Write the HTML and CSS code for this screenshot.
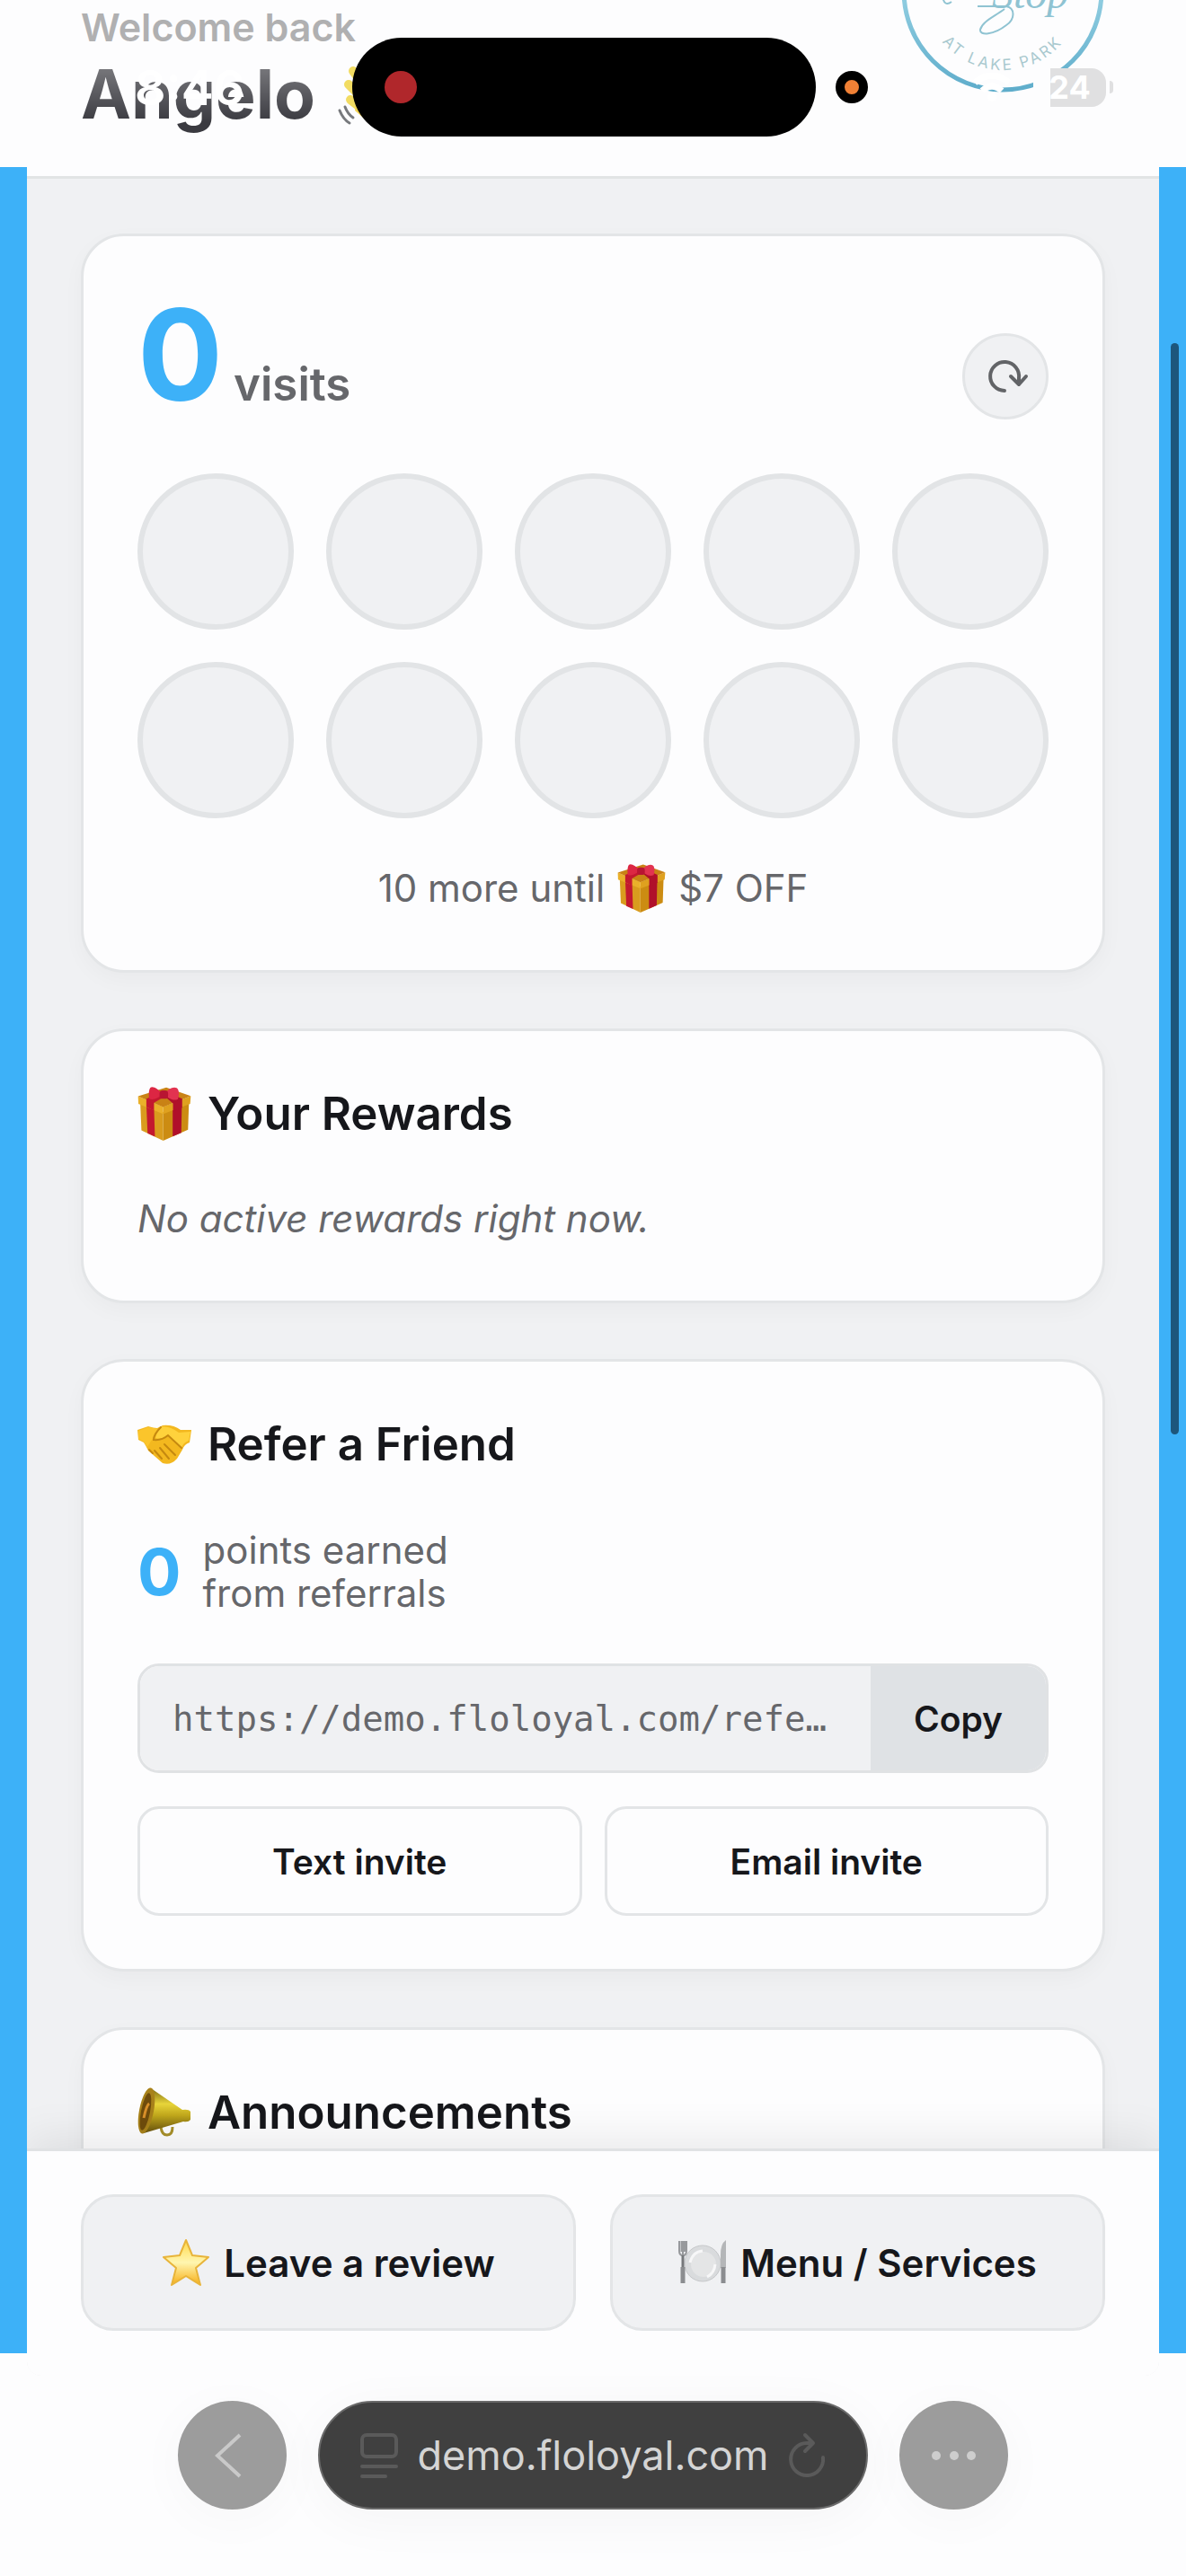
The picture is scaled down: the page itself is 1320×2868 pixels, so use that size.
FILE: index.html
```html
<!DOCTYPE html>
<html lang="en">
<head>
<meta charset="utf-8">
<meta name="viewport" content="width=device-width, initial-scale=1">
<title>Flo Loyal</title>
<link rel="stylesheet" href="styles.css">
</head>
<body>
<svg class="defs" aria-hidden="true">
  <symbol id="gift" viewBox="0 0 172 176">
    <path fill="#d99c1e" d="M7 50 82 82v94L11 142z"/>
    <path fill="#cc8c12" d="M82 82l84-30-3 88-81 36z"/>
    <path fill="#c3182f" d="M27 56l25 12 3 95-24-11z"/>
    <path fill="#b0102a" d="M113 66l30-12-2 96-28 12z"/>
    <path fill="#eab02a" d="M0 31l82 34v24L1 56z"/>
    <path fill="#dfa11f" d="M82 65l90-35-2 26-88 33z"/>
    <path fill="#c98215" d="M0 31 92 2l80 28-90 36z"/>
    <path fill="#c3182f" d="M27 39l60-24 18 6-53 31v26l-25-12z"/>
    <path fill="#b0102a" d="M144 39 92 16l-16 6 38 32v26l30-12z"/>
    <path fill="#dc2643" d="M81 24C66 8 48-4 40 3c-6 8-5 25-4 36 16 6 30-4 45-15z"/>
    <path fill="#e23350" d="M84 24c14-16 30-26 42-20 9 6 8 24 4 36-16 8-34-5-46-16z"/>
    <rect fill="#b81532" x="70" y="12" width="28" height="27" rx="10"/>
  </symbol>
</svg>

<div class="page">
  <div class="shell">
    <header class="header">
      <div class="greeting">
        <p class="eyebrow">Welcome back</p>
        <h1 class="name"><span class="name-text">Angelo</span>
          <svg class="wave" viewBox="0 0 60 76" aria-hidden="true">
            <g fill="none" stroke="#f2dc62" stroke-width="10" stroke-linecap="round"><path d="M18 12l16 22M13 27l18 18M15 44l18 14"/></g>
            <path fill="#efd04f" d="M26 30h30v40H36L20 56z"/>
            <g fill="none" stroke="#77797d" stroke-width="3" stroke-linecap="round"><path d="M3 56q4 10 11 14M9 52q3 8 9 12"/></g>
          </svg>
        </h1>
      </div>
      <svg class="logo" viewBox="0 0 228 104" role="img" aria-label="Stop at Lake Park">
        <defs>
          <linearGradient id="ring" x1="0" y1="0" x2="0" y2="1"><stop offset=".5" stop-color="#93cfe2"/><stop offset="1" stop-color="#5fadcb"/></linearGradient>
          <path id="arc" d="M26-10a88 88 0 0 0 176 0"/>
        </defs>
        <circle cx="114" cy="-10" r="110" fill="none" stroke="url(#ring)" stroke-width="5"/>
        <text class="logo-script" x="102" y="9">Stop</text>
        <path d="M86 7h32c10 2 10 14 0 21-14 11-30 12-29 5 2-9 15-14 27-23M47-4q2 12 10 6" fill="none" stroke="#8fc3d2" stroke-width="2"/>
        <text class="logo-arc"><textPath href="#arc" startOffset="50%" text-anchor="middle">AT LAKE PARK</textPath></text>
      </svg>
    </header>

    <main class="content">
      <section class="card">
        <div class="visits-row">
          <p class="visits"><span class="visits-count">0</span> <span class="visits-label">visits</span></p>
          <button class="refresh" type="button" aria-label="Refresh">
            <svg viewBox="0 0 44 44" aria-hidden="true"><path d="M21 38A16 16 0 1 1 37 24v5M28 22l9 9 8-9" fill="none" stroke="#626467" stroke-width="4" stroke-linecap="round" stroke-linejoin="round"/></svg>
          </button>
        </div>
        <div class="stamps">
          <span class="stamp"></span><span class="stamp"></span><span class="stamp"></span><span class="stamp"></span><span class="stamp"></span>
          <span class="stamp"></span><span class="stamp"></span><span class="stamp"></span><span class="stamp"></span><span class="stamp"></span>
        </div>
        <p class="progress">10 more until <svg class="progress-icon" aria-hidden="true"><use href="#gift"/></svg> $7 OFF</p>
      </section>

      <section class="card">
        <h2 class="card-title"><svg class="title-icon" aria-hidden="true"><use href="#gift"/></svg>Your Rewards</h2>
        <p class="empty">No active rewards right now.</p>
      </section>

      <section class="card">
        <h2 class="card-title">
          <svg class="title-icon" viewBox="0 0 60 60" aria-hidden="true">
            <path fill="#f3b81f" d="M0 14 12 10q6 2 10 2l6-3q12-1 20 5l12 0-2 14q-6 2-8 8l-6 10q-7 8-16 5L12 37q-3-6-5-9L1 25z"/>
            <path fill="#ffd23c" d="M24 11q10-3 22 6l13-1-2 10q-6 2-8 8l-15-13q-8 4-14 2z"/>
            <path fill="#fbc52b" d="M1 15l11-4 12 2-8 12-5 8-4-6-6-3z"/>
            <g fill="none" stroke="#c58910" stroke-width="2" stroke-linecap="round"><path d="M26 11q-8 8-8 14 9 1 16-5l15 14M30 30l12 12M25 34l10 12M19 37l8 9M13 36l4 4"/></g>
          </svg>Refer a Friend</h2>
        <div class="points">
          <strong class="points-count">0</strong>
          <p class="points-label">points earned<br>from referrals</p>
        </div>
        <div class="share">
          <input class="share-link" type="text" readonly aria-label="Referral link" value="https://demo.floloyal.com/refe…">
          <button class="share-copy" type="button">Copy</button>
        </div>
        <div class="invites">
          <button class="invite" type="button">Text invite</button>
          <button class="invite" type="button">Email invite</button>
        </div>
      </section>

      <section class="card card-last">
        <h2 class="card-title">
          <svg class="title-icon" viewBox="0 0 60 60" aria-hidden="true">
            <defs><linearGradient id="brass" x1="0" y1="0" x2="0" y2="1"><stop offset="0" stop-color="#7d6a14"/><stop offset=".35" stop-color="#e8d53a"/><stop offset=".6" stop-color="#c2a91c"/><stop offset="1" stop-color="#66500d"/></linearGradient></defs>
            <path d="M26 46q1 9 7 9t6-9" fill="none" stroke="#a8902a" stroke-width="3"/>
            <path fill="url(#brass)" d="M15 3 50 27q7-1 9 2v9q-2 3-8 2L7 53z"/>
            <ellipse cx="10" cy="28" rx="8" ry="26" transform="rotate(11 10 28)" fill="#a8821b"/>
            <ellipse cx="9" cy="29" rx="5" ry="21" transform="rotate(11 9 29)" fill="#6f4c0c"/>
            <path d="M7 36q3-14 6-16" fill="none" stroke="#d9902a" stroke-width="3"/>
          </svg>Announcements</h2>
      </section>
    </main>

    <nav class="actions" aria-label="Actions">
      <button class="action" type="button">
        <svg class="action-icon" viewBox="0 0 54 54" aria-hidden="true">
          <defs><linearGradient id="star" x1="0" y1="0" x2="0" y2="1"><stop offset="0" stop-color="#ffd94a"/><stop offset=".5" stop-color="#fff6b0"/><stop offset="1" stop-color="#f7ae16"/></linearGradient></defs>
          <path fill="url(#star)" stroke="#e8b43a" stroke-width="2" stroke-linejoin="round" d="M27 2l7 17 18 2-14 12 5 19-16-10-16 10 5-19L2 21l18-2z"/>
        </svg>Leave a review</button>
      <button class="action" type="button">
        <svg class="action-icon" viewBox="0 0 54 54" aria-hidden="true">
          <circle cx="27" cy="28" r="20" fill="#d9dbdd" stroke="#c6c8ca"/>
          <circle cx="28" cy="29" r="14" fill="#e4e5e6"/><path d="M13 27q3-12 14-13M41 29q-1 10-9 14" fill="none" stroke="#f7f7f8" stroke-width="3"/>
          <path fill="none" stroke="#97999c" stroke-width="2" d="M1 3v11q0 5 4 5t4-5V3M5 3v16M3.500 3v12M7 3v12"/><path stroke="#75777a" stroke-width="3" d="M5 19v16"/><path stroke="#8b8d90" stroke-width="5" d="M5 32v18"/>
          <path fill="#b4b6b8" d="M53 2v31h-6V18q0-12 6-16z"/><path stroke="#8b8d90" stroke-width="5" d="M50 32v18"/>
        </svg>Menu / Services</button>
    </nav>
  </div>

  <footer class="toolbar">
    <button class="round" type="button" aria-label="Back"><svg viewBox="0 0 121 121" aria-hidden="true"><path d="M69 38 44 61l25 23" fill="none" stroke="#c9c9c9" stroke-width="4"/></svg></button>
    <div class="address">
      <svg class="address-icon" viewBox="0 0 44 50" aria-hidden="true"><g fill="none" stroke="#5a5a5a" stroke-width="4" stroke-linecap="round"><rect x="3" y="2" width="38" height="24" rx="5"/><path d="M3 37h38M3 48h26"/></g></svg>
      <span class="address-text">demo.floloyal.com</span>
      <svg class="address-icon" viewBox="0 0 44 50" aria-hidden="true"><path d="M40 27A18 18 0 1 1 22 11h6M20 2l9 9-9 9" fill="none" stroke="#5a5a5a" stroke-width="4" stroke-linecap="round" stroke-linejoin="round"/></svg>
    </div>
    <button class="round" type="button" aria-label="More"><svg viewBox="0 0 121 121" aria-hidden="true"><g fill="#cdcdcd"><circle cx="41" cy="61" r="5"/><circle cx="61" cy="61" r="5"/><circle cx="80" cy="61" r="5"/></g></svg></button>
  </footer>

  <div class="status">
    <span class="status-time">8:46</span>
    <span class="island"><span class="rec"></span></span>
    <span class="mic"></span>
    <span class="status-icons">
      <svg class="wifi" viewBox="0 0 44 32" aria-hidden="true"><g fill="none" stroke="#fff" stroke-width="7"><path d="M3 11q19-16 38 0M11 20q11-10 22 0"/></g><circle cx="22" cy="27" r="5" fill="#fff"/></svg>
      <span class="battery-group"><span class="battery">24</span><span class="battery-nub"></span></span>
    </span>
  </div>
  <div class="scrollbar"></div>
</div>
</body>
</html>
```
FILE: styles.css
```css
* { box-sizing: border-box; }

body {
  margin: 0;
  background: #fdfdfe;
  color: #16171b;
  font-family: Inter, "Liberation Sans", sans-serif;
}

h1, h2, p { margin: 0; }

button, input { font-family: inherit; color: inherit; margin: 0; }
button { padding: 0; cursor: pointer; }

.defs { display: none; }

.page {
  position: relative;
  display: flex;
  flex-direction: column;
  height: 100vh;
  overflow: hidden;
  background: linear-gradient(to bottom, #fdfdfe 186px, #3db1f8 186px, #3db1f8 calc(100% - 248px), #fdfdfe calc(100% - 248px));
}

.shell {
  flex: 1;
  min-height: 0;
  display: flex;
  flex-direction: column;
  margin: 0 30px;
  background: #f0f1f3;
  border-radius: 0 0 16px 16px;
  overflow: hidden;
}

/* Header */
.header {
  flex: none;
  display: flex;
  justify-content: space-between;
  padding: 0 60px;
  background: #fdfdfe;
  border-bottom: 3px solid #e2e4e5;
}
.greeting { padding: 14px 0 46px; }
.eyebrow {
  margin-bottom: 14px;
  font-size: 43px;
  line-height: 32px;
  font-weight: 600;
  color: #b0b0b1;
}
.name {
  display: flex;
  align-items: center;
  gap: 24px;
  font-size: 75px;
  line-height: 90px;
  font-weight: 700;
}
.name-text {
  background: linear-gradient(#79797d 15%, #3a3a40 85%);
  background-clip: text;
  -webkit-background-clip: text;
  color: transparent;
}
.wave { width: 60px; height: 76px; }
.logo { width: 228px; height: 104px; }
.logo-script { font: italic 48px "Liberation Serif", serif; fill: #8fc3d2; }
.logo-arc { font-size: 17px; letter-spacing: 3px; fill: #a9c9cf; }

/* Cards */
.content {
  flex: 1;
  min-height: 0;
  display: flex;
  flex-direction: column;
  gap: 62px;
  padding: 61px 60px 0;
  overflow: hidden;
}
.card {
  flex: none;
  padding: 59px 60px;
  background: #fdfdfe;
  border: 3px solid #e3e5e7;
  border-radius: 48px;
  box-shadow: 0 8px 24px rgba(0, 0, 0, 0.03);
}
.card-last { min-height: 300px; }
.card-title {
  display: flex;
  align-items: center;
  gap: 18px;
  font-size: 51px;
  line-height: 66px;
  font-weight: 600;
}
.title-icon { flex: none; width: 60px; height: 60px; }

.visits-row {
  display: flex;
  justify-content: space-between;
  align-items: flex-end;
}
.visits {
  display: flex;
  align-items: baseline;
  gap: 12px;
}
.visits-count { font-size: 141px; line-height: 145px; font-weight: 700; color: #3db1f8; }
.visits-label { font-size: 51px; line-height: 66px; font-weight: 600; color: #66676b; }
.refresh {
  display: flex;
  align-items: center;
  justify-content: center;
  width: 96px;
  height: 96px;
  background: #f0f1f3;
  border: 3px solid #e3e5e7;
  border-radius: 50%;
}
.refresh svg { width: 44px; height: 44px; overflow: visible; }

.stamps {
  display: grid;
  grid-template-columns: repeat(5, 1fr);
  gap: 36px;
  margin-top: 60px;
}
.stamp {
  aspect-ratio: 1;
  background: #f0f1f3;
  border: 6px solid #e2e4e6;
  border-radius: 50%;
}
.progress {
  display: flex;
  align-items: center;
  justify-content: center;
  gap: 14px;
  margin-top: 46px;
  font-size: 42px;
  line-height: 64px;
  color: #66676b;
}
.progress-icon { width: 54px; height: 54px; }

.empty {
  margin-top: 52px;
  font-size: 42px;
  line-height: 64px;
  font-style: italic;
  color: #66676b;
}

.points {
  display: flex;
  align-items: center;
  gap: 24px;
  margin-top: 61px;
}
.points-count { font-size: 72px; line-height: 72px; color: #3db1f8; }
.points-label { font-size: 42px; line-height: 48px; color: #66676b; }

.share {
  display: flex;
  height: 122px;
  margin-top: 54px;
  border: 3px solid #e0e2e4;
  border-radius: 24px;
  overflow: hidden;
}
.share-link {
  flex: 1;
  min-width: 0;
  padding: 0 36px;
  border: 0;
  background: #f0f1f3;
  font-family: "DejaVu Sans Mono", monospace;
  font-size: 39px;
  color: #66676b;
}
.share-copy {
  width: 195px;
  border: 0;
  background: #dfe2e5;
  font-size: 39px;
  font-weight: 600;
}
.invites {
  display: grid;
  grid-template-columns: 1fr 1fr;
  gap: 25px;
  margin-top: 37px;
}
.invite {
  height: 122px;
  background: #fdfdfe;
  border: 3px solid #e3e5e7;
  border-radius: 24px;
  font-size: 39px;
  font-weight: 600;
}

/* Bottom actions */
.actions {
  position: relative;
  flex: none;
  display: grid;
  grid-template-columns: 1fr 1fr;
  gap: 38px;
  padding: 48px 60px 50px;
  background: #fdfdfe;
  border-top: 3px solid #e0e2e4;
  box-shadow: 0 -8px 48px rgba(0, 0, 0, 0.09);
}
.action {
  display: flex;
  align-items: center;
  justify-content: center;
  gap: 15px;
  height: 152px;
  background: #f0f1f3;
  border: 3px solid #e3e5e7;
  border-radius: 36px;
  font-size: 42px;
  font-weight: 600;
}
.action-icon { flex: none; width: 54px; height: 54px; }

/* Browser toolbar */
.toolbar {
  flex: none;
  display: flex;
  justify-content: center;
  gap: 35px;
  padding: 28px 30px 74px;
}
.round {
  flex: none;
  width: 121px;
  height: 121px;
  border: 0;
  border-radius: 50%;
  background: #9c9c9c;
  box-shadow: 0 10px 60px rgba(0, 0, 0, 0.03);
}
.round svg { display: block; }
.address {
  flex: 0 1 612px;
  display: flex;
  align-items: center;
  justify-content: space-between;
  padding: 0 44px;
  background: #404040;
  border: 2px solid #6a6a6a;
  border-radius: 61px;
  box-shadow: 0 10px 60px rgba(0, 0, 0, 0.04);
}
.address-icon { flex: none; width: 44px; height: 50px; overflow: visible; }
.address-text { font-size: 45px; color: #d4d4d4; }

/* Device overlays */
.status {
  position: absolute;
  top: 42px;
  left: 0;
  right: 0;
  display: grid;
  grid-template-columns: 392px 516px 58px 1fr;
  align-items: center;
  height: 110px;
}
.status-time {
  padding-left: 150px;
  font-size: 54px;
  font-weight: 600;
  color: #fff;
}
.island {
  display: flex;
  align-items: center;
  height: 110px;
  padding-left: 36px;
  background: #000;
  border-radius: 55px;
}
.rec { width: 36px; height: 36px; border-radius: 50%; background: #b0272b; }
.mic {
  justify-self: end;
  width: 36px;
  height: 36px;
  border: 10px solid #000;
  border-radius: 50%;
  background: #f08035;
}
.status-icons {
  display: flex;
  align-items: center;
  justify-content: flex-end;
  gap: 24px;
  padding-right: 81px;
}
.wifi { width: 44px; height: 32px; }
.battery-group {
  display: flex;
  align-items: center;
  gap: 4px;
}
.battery {
  width: 81px;
  border-radius: 16px;
  background: linear-gradient(to right, #fdfdfe 19px, #e0e0e1 19px);
  font-size: 36px;
  line-height: 43px;
  font-weight: 700;
  text-align: center;
  color: #fff;
}
.battery-nub {
  width: 4px;
  height: 14px;
  border-radius: 0 4px 4px 0;
  background: #e0e0e1;
}
.scrollbar {
  position: absolute;
  top: 382px;
  right: 8px;
  width: 9px;
  height: 1215px;
  border-radius: 5px;
  background: #1d567c;
}
```
